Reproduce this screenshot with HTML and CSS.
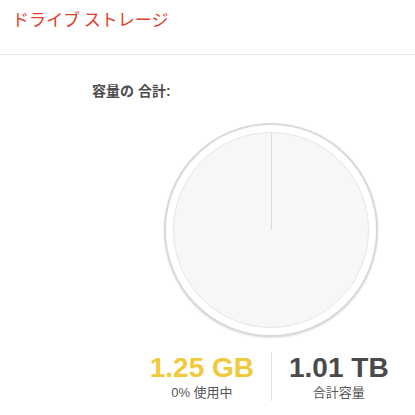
FILE: index.html
```html
<!DOCTYPE html>
<html lang="ja">
<head>
<meta charset="utf-8">
<link rel="stylesheet" href="styles.css">
</head>
<body>
<header class="header">
  <h1 class="title">ドライブ ストレージ</h1>
</header>
<main class="content">
  <div class="label">容量の 合計:</div>
  <div class="chart">
    <div class="pie">
      <div class="needle"></div>
    </div>
  </div>
  <div class="stats">
    <div class="stat stat-used">
      <div class="stat-inner">
        <div class="value used">1.25 GB</div>
        <div class="caption">0% 使用中</div>
      </div>
    </div>
    <div class="stat stat-total">
      <div class="stat-inner">
        <div class="value total">1.01 TB</div>
        <div class="caption">合計容量</div>
      </div>
    </div>
  </div>
</main>
</body>
</html>
```
FILE: styles.css
```css
html, body {
  margin: 0;
  padding: 0;
  background: #ffffff;
}
body {
  font-family: "Liberation Sans", "Noto Sans CJK JP", sans-serif;
  color: #4a4a4a;
}
.header {
  box-sizing: border-box;
  height: 55px;
  padding: 7px 0 0 12px;
  border-bottom: 1px solid #e8e8e8;
}
.title {
  margin: 0;
  font-family: "Noto Sans CJK JP", sans-serif;
  font-weight: 400;
  font-size: 17px;
  line-height: 24px;
  color: #e0412c;
}
.content {
  padding-top: 26px;
}
.label {
  padding-left: 92px;
  font-size: 14px;
  font-weight: bold;
  line-height: 20px;
  color: #4d4d4d;
}
.chart {
  margin: 22px 0 0 164px;
}
.pie {
  position: relative;
  box-sizing: border-box;
  width: 214px;
  height: 214px;
  border-radius: 50%;
  border: 2px solid #d9d9d9;
  background: #ffffff;
  box-shadow: 0 1px 2px rgba(0, 0, 0, 0.12);
  display: flex;
  align-items: center;
  justify-content: center;
}
.pie::before {
  content: "";
  box-sizing: border-box;
  width: 196px;
  height: 196px;
  border-radius: 50%;
  background: #f7f7f7;
  border: 1px solid #e6e6e6;
}
.needle {
  position: absolute;
  left: 105px;
  top: 7px;
  width: 1px;
  height: 98px;
  background: #dcdcdc;
}
.stats {
  display: grid;
  grid-template-columns: 1fr 1fr;
  margin: 15px 0 0 130px;
  width: 282px;
}
.stat-used {
  display: flex;
  justify-content: flex-end;
  padding-right: 17px;
}
.stat-total {
  display: flex;
  justify-content: flex-start;
  padding-left: 17px;
  border-left: 1px solid #e2e2e2;
}
.stat-inner {
  text-align: center;
}
.value {
  font-size: 28px;
  font-weight: bold;
  line-height: 32px;
}
.used {
  color: #f1c93c;
}
.total {
  color: #4a4a4a;
}
.caption {
  font-size: 13px;
  line-height: 17px;
  color: #555555;
}
```
